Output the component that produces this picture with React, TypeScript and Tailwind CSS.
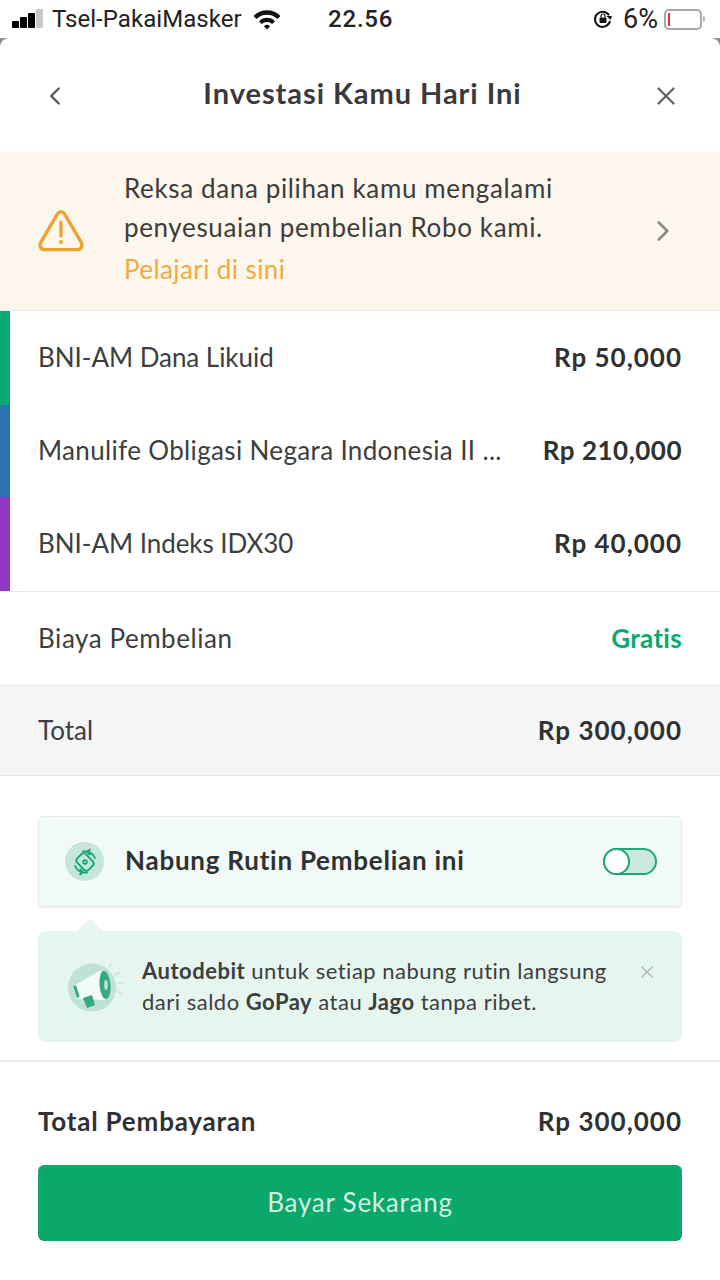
import React from 'react';
import { ChevronLeft, ChevronRight, X } from 'lucide-react';

const funds = [
  { name: 'BNI-AM Dana Likuid', amount: 'Rp 50,000', bar: 'bg-[#0aa96f]', height: 'h-[94px]', track: 'tracking-[-0.05px]', amountTrack: 'tracking-[1px]' },
  { name: 'Manulife Obligasi Negara Indonesia II ...', amount: 'Rp 210,000', bar: 'bg-[#2a74b4]', height: 'h-[92px]', track: 'tracking-[0.35px]', amountTrack: 'tracking-[0.5px]' },
  { name: 'BNI-AM Indeks IDX30', amount: 'Rp 40,000', bar: 'bg-[#9038c4]', height: 'h-[94px]', track: 'tracking-[-0.05px]', amountTrack: 'tracking-[1px]' },
];

const StatusBar = () => (
  <div className="h-[38px] flex items-center bg-white text-[#222] text-[24px] font-['Roboto',sans-serif] pl-[12px] pr-[15px]">
    <div className="flex items-end gap-[1px] h-[18px] mt-[-1px] w-[32px]">
      <span className="w-[7px] h-[7px] rounded-[1px] bg-black" />
      <span className="w-[7px] h-[11px] rounded-[1px] bg-black" />
      <span className="w-[7px] h-[15px] rounded-[1px] bg-black" />
      <span className="w-[7px] h-[19px] rounded-[1px] bg-[#c8c8c8]" />
    </div>
    <span className="ml-[8px] w-[200px] tracking-[0.05px] font-normal whitespace-nowrap">Tsel-PakaiMasker</span>
    <svg width="30" height="22" viewBox="0 0 30 22" className="shrink-0">
      <path d="M1.5 8 A19 19 0 0 1 28.5 8 L25.5 11 A15 15 0 0 0 4.5 11 Z" fill="#111" />
      <path d="M7 13.2 A11 11 0 0 1 23 13.2 L20.2 16 A7.5 7.5 0 0 0 9.8 16 Z" fill="#111" />
      <path d="M12 18.2 A4.4 4.4 0 0 1 18 18.2 L15 21.4 Z" fill="#111" />
    </svg>
    <span className="ml-[46px] font-medium tracking-[0.8px]">22.56</span>
    <div className="ml-auto flex items-center">
      <svg width="20" height="20" viewBox="0 0 20 20" className="mr-[10px]">
        <path d="M16 6.2 A7.6 7.6 0 1 0 17 12" fill="none" stroke="#111" strokeWidth="2" />
        <path d="M13.5 7 L19 7 L17.5 11 Z" fill="#111" />
        <rect x="6.5" y="8.5" width="7" height="5.5" rx="1" fill="#111" />
        <path d="M8 8.5 V7 A2 2 0 0 1 12 7 V8.5" fill="none" stroke="#111" strokeWidth="1.2" />
      </svg>
      <span className="text-[27px] leading-none">6%</span>
      <div className="ml-[6px] w-[38px] h-[21px] rounded-[5px] border-2 border-[#a8a8a8] p-[2px] flex">
        <span className="w-[2px] h-full bg-[#d8343a]" />
      </div>
      <span className="w-[2px] h-[6px] ml-[1px] rounded-r-full bg-[#b5b5b5]" />
    </div>
  </div>
);

const WarningIcon = () => (
  <svg width="48" height="44" viewBox="0 0 48 44" fill="none">
    <path
      d="M20.4 5 L3.6 33.6 C1.8 36.8 4 40.6 7.6 40.6 H40.4 C44 40.6 46.2 36.8 44.4 33.6 L27.6 5 C26 2.2 22 2.2 20.4 5 Z"
      stroke="#eda12f"
      strokeWidth="3.4"
      strokeLinejoin="round"
    />
    <path d="M24 13 V27" stroke="#eda12f" strokeWidth="3.2" strokeLinecap="round" />
    <circle cx="24" cy="33" r="2" fill="#eda12f" />
  </svg>
);

const SavingIcon = () => (
  <div className="w-[39px] h-[39px] rounded-full bg-[#c6e6da] flex items-center justify-center shrink-0">
    <svg width="30" height="30" viewBox="0 0 30 30" fill="none" stroke="#12a672" strokeWidth="1.8" strokeLinecap="round" strokeLinejoin="round">
      <rect x="7" y="9" width="16" height="12" rx="3" transform="rotate(45 15 15)" />
      <circle cx="15" cy="15" r="1.8" />
      <path d="M13 4.5 A11 11 0 0 1 25 11" />
      <path d="M20 2.5 L17 4.8 L19.6 7.6" />
      <path d="M17 25.5 A11 11 0 0 1 5 19" />
      <path d="M10 27.5 L13 25.2 L10.4 22.4" />
    </svg>
  </div>
);

const MegaphoneIcon = () => (
  <svg width="58" height="56" viewBox="0 0 58 56" className="shrink-0">
    <circle cx="24" cy="28.5" r="24" fill="#bfe2d5" />
    <path d="M7 26 L33 11 L38 41 L10 40 Z" fill="#f3fbf8" />
    <ellipse cx="37" cy="26" rx="5.5" ry="14" fill="#35a97f" transform="rotate(-5 37 26)" />
    <ellipse cx="38" cy="26" rx="1.8" ry="5" fill="#bfe2d5" />
    <path d="M7 28 L10 37" stroke="#35a97f" strokeWidth="3" strokeLinecap="round" />
    <path d="M15 39 L24 36 L27 46 L19 49 Z" fill="#35a97f" />
    <g stroke="#cbe7dc" strokeWidth="1.6" strokeLinecap="round">
      <path d="M41 9 L43 5" />
      <path d="M47 16 L52 13" />
      <path d="M49 24 L55 24" />
      <path d="M48 32 L54 35" />
    </g>
  </svg>
);

export default function App() {
  return (
    <div className="w-[720px] h-[1280px] overflow-hidden bg-white font-['Lato',sans-serif] text-[#2f3133]">
      <StatusBar />
      <div className="bg-[#8f8f8f]">
        <div className="bg-white rounded-t-[9px]">
          {/* Header */}
          <div className="h-[114px] px-[41px] flex items-center justify-between">
            <ChevronLeft className="w-[30px] h-[30px] text-[#555] -ml-[1px] mt-[2px]" strokeWidth={1.9} />
            <h1 className="text-[29px] font-bold text-[#3a3a3c] tracking-[0.95px] mt-[-4px] ml-[4px]">Investasi Kamu Hari Ini</h1>
            <X className="w-[30px] h-[30px] text-[#666] mr-[-2px] mt-[2px]" strokeWidth={1.8} />
          </div>

          {/* Notice */}
          <div className="h-[158px] bg-[#fcf6ec] pl-[37px] pr-[40px] flex items-center">
            <WarningIcon />
            <div className="ml-[39px] flex-1 text-[26px] leading-[39px] text-[#3c3c3c] tracking-[0.63px] mt-[-4px]">
              <p>Reksa dana pilihan kamu mengalami</p>
              <p>penyesuaian pembelian Robo kami.</p>
              <p className="text-[#eeac3f] mt-[3px] tracking-[0.4px]">Pelajari di sini</p>
            </div>
            <ChevronRight className="w-[34px] h-[34px] text-[#8a8a8a]" strokeWidth={1.9} />
          </div>

          {/* Funds */}
          <div className="border-y border-[#e8e9eb]">
            {funds.map((f) => (
              <div key={f.name} className={`${f.height} flex items-center`}>
                <div className={`w-[10px] h-full ${f.bar}`} />
                <div className="flex-1 flex items-center justify-between pl-[28px] pr-[38px] text-[26px] mt-[-2px]">
                  <span className={`text-[#3c3e40] whitespace-nowrap ${f.track}`}>{f.name}</span>
                  <span className={`font-bold ${f.amountTrack}`}>{f.amount}</span>
                </div>
              </div>
            ))}
          </div>

          <div className="h-[93px] flex items-center justify-between px-[38px] text-[26px]">
            <span className="text-[#3c3e40] tracking-[0.55px]">Biaya Pembelian</span>
            <span className="font-bold text-[#0aa96f] tracking-[0.3px]">Gratis</span>
          </div>

          <div className="h-[91px] bg-[#f4f5f7] border-y border-[#e8e9eb] flex items-center justify-between px-[38px] text-[26px]">
            <span className="text-[#3c3e40]">Total</span>
            <span className="font-bold tracking-[1px]">Rp 300,000</span>
          </div>

          {/* Recurring */}
          <div className="px-[38px] pt-[40px] pb-[18px] border-b-2 border-[#e8e9eb]">
            <div className="h-[91px] bg-[#f1faf7] rounded-[5px] border border-[#e6ebe9] shadow-[0_1px_2px_rgba(0,0,0,0.08)] pl-[26px] pr-[24px] flex items-center">
              <SavingIcon />
              <span className="ml-[21px] text-[26px] font-bold tracking-[0.75px] mt-[-2px]">Nabung Rutin Pembelian ini</span>
              <div className="ml-auto w-[54px] h-[27px] rounded-full border-2 border-[#1fa67a] bg-[#c9e9dc] flex items-center">
                <span className="w-[27px] h-[27px] rounded-full bg-white border-2 border-[#1fa67a] -ml-[2px]" />
              </div>
            </div>

            <div className="relative mt-[24px] h-[111px] bg-[#e6f6ef] rounded-[8px] pl-[30px] flex items-center">
              <span className="absolute -top-[9px] left-[43px] w-[18px] h-[18px] rotate-45 rounded-[2px] bg-[#e6f6ef]" />
              <MegaphoneIcon />
              <p className="ml-[16px] mt-[-2px] text-[22px] leading-[31px] text-[#3c3e40] tracking-[0.5px] whitespace-nowrap">
                <b>Autodebit</b> untuk setiap nabung rutin langsung
                <br />
                dari saldo <b>GoPay</b> atau <b>Jago</b> tanpa ribet.
              </p>
              <X className="absolute right-[25px] top-[31px] w-[20px] h-[20px] text-[#b4bdb9]" strokeWidth={2} />
            </div>
          </div>

          {/* Footer */}
          <div className="px-[38px] pt-[40px]">
            <div className="flex items-center justify-between text-[26px] font-bold">
              <span className="tracking-[0.8px]">Total Pembayaran</span>
              <span className="tracking-[1px]">Rp 300,000</span>
            </div>
            <button
              type="button"
              className="mt-[24px] w-full h-[76px] rounded-[6px] bg-[#0aa86a] text-[#d5f0e4] text-[26px] tracking-[0.75px] pb-[2px]"
            >
              Bayar Sekarang
            </button>
          </div>
        </div>
      </div>
    </div>
  );
}
